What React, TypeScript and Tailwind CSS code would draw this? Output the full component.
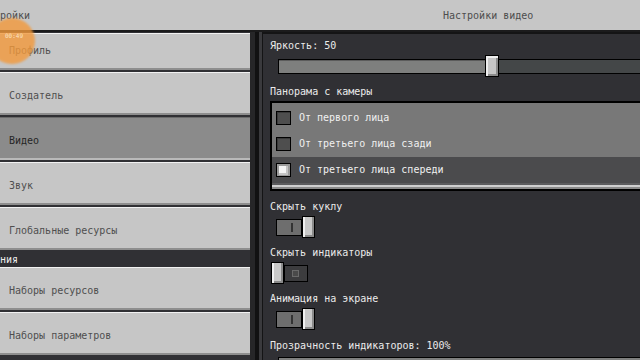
import React from 'react';

const mono = "font-['DejaVu_Sans_Mono','Liberation_Mono',monospace]";

function SideButton({ label, active = false, first = false }: { label: string; active?: boolean; first?: boolean }) {
  return (
    <div
      className={`flex items-center pl-[9px] shrink-0 ${first ? 'h-[37px] pb-[2px]' : 'h-[43px] pt-[4px]'} ${
        active
          ? 'bg-[#8b8b8b] text-[#262626] shadow-[inset_0_-2px_0_#b9b9b9,inset_0_1px_0_#6a6a6a]'
          : 'bg-[#c6c6c6] text-[#4f4f4f] shadow-[inset_0_1px_0_#f2f2f2,inset_0_-2px_0_#8e8e8e]'
      }`}
    >
      {label}
    </div>
  );
}

function Toggle({ on }: { on: boolean }) {
  const thumb = (
    <div className="w-[13px] h-[22px] border border-black bg-[#c9c9c9] shadow-[inset_2px_0_0_#f0f0f0,inset_-2px_-2px_0_#8a8a8a] shrink-0" />
  );
  if (on) {
    return (
      <div className="flex items-center h-[22px] pl-[6px]">
        <div className="w-[26px] h-[17px] border border-black bg-[#6e6e6e] flex items-center justify-end pr-[8px]">
          <div className="w-[2px] h-[9px] bg-[#333333]" />
        </div>
        {thumb}
      </div>
    );
  }
  return (
    <div className="flex items-center h-[22px] pl-[1px]">
      {thumb}
      <div className="w-[24px] h-[17px] border border-black bg-[#3c3c3e] flex items-center pl-[7px]">
        <div className="w-[7px] h-[7px] border border-[#6a6a6a] bg-[#4a4a4a]" />
      </div>
    </div>
  );
}

function Option({ label, checked = false, dark = false }: { label: string; checked?: boolean; dark?: boolean }) {
  return (
    <div className={`h-[26px] shrink-0 flex items-center pl-[4px] gap-[8px] ${dark ? 'bg-[#4b4b4d]' : 'bg-[#787878]'}`}>
      <div
        className={`w-[15px] h-[14px] border border-black flex items-center justify-center ${
          checked ? 'bg-[#9a9a9a]' : 'bg-[#4e4e4e] shadow-[inset_1px_1px_0_#3a3a3a]'
        }`}
      >
        {checked && <div className="w-[9px] h-[9px] bg-[#f4f4f4] shadow-[inset_-2px_-2px_0_#c4c4c4]" />}
      </div>
      <span className="text-[#f0f0f0]">{label}</span>
    </div>
  );
}

export default function App() {
  return (
    <div className={`relative w-[640px] h-[360px] overflow-hidden bg-[#303034] flex flex-col text-[10px] leading-[12px] ${mono}`}>
      <div className="h-[32px] shrink-0 bg-[#c6c6c6] flex items-center text-[#4d4d4d] border-b-2 border-[#1b1b1c]">
        <div className="w-[262px] pt-[2px]">ройки</div>
        <div className="flex-1 pl-[181px] pt-[2px]">Настройки видео</div>
      </div>

      <div className="flex flex-1 min-h-0">
        <div className="w-[250px] shrink-0 flex flex-col gap-[2px] pt-[1px] overflow-hidden">
          <SideButton label="Профиль" first />
          <SideButton label="Создатель" />
          <SideButton label="Видео" active />
          <SideButton label="Звук" />
          <SideButton label="Глобальные ресурсы" />
          <div className="h-[15px] -my-[1px] pt-[2px] flex items-center text-[#eeeeee] shrink-0">ния</div>
          <SideButton label="Наборы ресурсов" />
          <SideButton label="Наборы параметров" />
        </div>

        <div className="w-[5px] shrink-0 bg-[#262628]" />
        <div className="w-[4px] shrink-0 bg-[#111112]" />
        <div className="w-[3px] shrink-0 bg-[#3a3a3d]" />

        <div className="flex-1 min-w-0 overflow-hidden flex flex-col pl-[7px] border-t-2 border-l border-[#141415] pt-[6px] text-[#ebebeb]">
          <div className="h-[12px] shrink-0">Яркость: 50</div>
          <div className="relative h-[22px] shrink-0 mt-[3px] ml-[8px] -mr-[20px] flex items-center">
            <div className="flex w-full h-[15px] border border-black">
              <div className="w-[207px] bg-[#7e7f7e] shadow-[inset_0_1px_0_#5c5c5c]" />
              <div className="flex-1 bg-[#444748]" />
            </div>
            <div className="absolute left-[207px] top-0 w-[14px] h-[22px] border border-black bg-[#c6c6c6] shadow-[inset_2px_2px_0_#eeeeee,inset_-2px_-2px_0_#8b8b8b]" />
          </div>

          <div className="h-[12px] shrink-0 mt-[9px]">Панорама с камеры</div>
          <div className="mt-[3px] -mr-[20px] shrink-0 border-t-2 border-l-2 border-black pt-[2px] flex flex-col bg-[#787878]">
            <Option label="От первого лица" />
            <Option label="От третьего лица сзади" />
            <Option label="От третьего лица спереди" checked dark />
            <div className="h-[2px] bg-[#5c5c5e]" />
            <div className="h-[2px] bg-[#cfcfcf]" />
            <div className="h-[2px] bg-[#8a8a8a]" />
          </div>
          <div className="h-[2px] -mr-[20px] shrink-0 bg-black" />

          <div className="h-[12px] shrink-0 mt-[10px]">Скрыть куклу</div>
          <div className="mt-[3px] shrink-0">
            <Toggle on />
          </div>

          <div className="h-[12px] shrink-0 mt-[9px]">Скрыть индикаторы</div>
          <div className="mt-[3px] shrink-0">
            <Toggle on={false} />
          </div>

          <div className="h-[12px] shrink-0 mt-[9px]">Анимация на экране</div>
          <div className="mt-[3px] shrink-0">
            <Toggle on />
          </div>

          <div className="h-[12px] shrink-0 mt-[10px]">Прозрачность индикаторов: 100%</div>
          <div className="mt-[5px] shrink-0 ml-[8px] -mr-[20px] h-[15px] border border-black bg-[#7e7f7e]" />
        </div>
      </div>

      <div className="absolute left-[-11px] top-[18px] w-[46px] h-[46px] rounded-full bg-[#f39a3c] opacity-80 blur-[1px]" />
      <div className="absolute left-[5px] top-[32px] text-[6px] leading-[7px] text-[#fbe2c2]">00:49</div>
    </div>
  );
}
